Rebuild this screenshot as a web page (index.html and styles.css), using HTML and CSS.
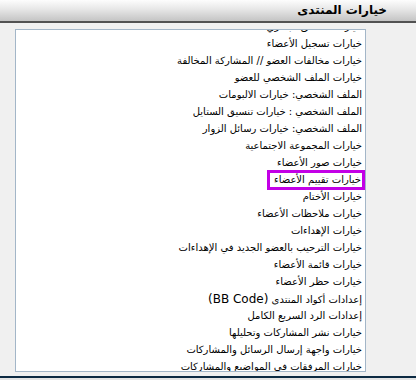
FILE: index.html
```html
<!DOCTYPE html>
<html lang="ar" dir="rtl">
<head>
    <meta charset="UTF-8">
    <meta name="viewport" content="width=device-width, initial-scale=1.0">
    <title>خيارات المنتدى</title>
    <link rel="stylesheet" href="styles.css">
</head>
<body>
    <div class="head">خيارات المنتدى</div>
    <div class="panel">
        <div class="listbox">
            <ul class="options">
                <li>خيارات التحقق البشري</li>
                <li>خيارات تسجيل الأعضاء</li>
                <li>خيارات مخالفات العضو // المشاركة المخالفة</li>
                <li>خيارات الملف الشخصي للعضو</li>
                <li>الملف الشخصي: خيارات الالبومات</li>
                <li>الملف الشخصي : خيارات تنسيق الستايل</li>
                <li>الملف الشخصي: خيارات رسائل الزوار</li>
                <li>خيارات المجموعة الاجتماعية</li>
                <li>خيارات صور الأعضاء</li>
                <li><span class="marked">خيارات تقييم الأعضاء</span></li>
                <li>خيارات الأختام</li>
                <li>خيارات ملاحظات الأعضاء</li>
                <li>خيارات الإهداءات</li>
                <li>خيارات الترحيب بالعضو الجديد في الإهداءات</li>
                <li>خيارات قائمة الأعضاء</li>
                <li>خيارات حظر الأعضاء</li>
                <li><span>إعدادات أكواد المنتدى <span class="latin">(BB Code)</span></span></li>
                <li>إعدادات الرد السريع الكامل</li>
                <li>خيارات نشر المشاركات وتحليلها</li>
                <li>خيارات واجهة إرسال الرسائل والمشاركات</li>
                <li>خيارات المرفقات في المواضيع والمشاركات</li>
            </ul>
        </div>
    </div>
    <div class="foot"></div>
</body>
</html>
```

FILE: styles.css
```css
* { margin: 0; padding: 0; box-sizing: border-box; }
body {
    font-family: "DejaVu Sans", sans-serif;
    background: #ebebeb;
    color: #000;
    width: 416px; height: 380px; overflow: hidden;
}
.head {
    height: 23px;
    padding-right: 29px;
    background: linear-gradient(to bottom, #fdfdfd, #e6e6e6 45%, #c4c4c4);
    border-bottom: 2px solid #525252;
    font-size: 12px; font-weight: bold;
    line-height: 20px;
}
.panel {
    background: #f0f0f0;
    height: 353px;
    padding: 6px 50px 0 15px;
}
.listbox {
    background: #fff;
    border: 1px solid #a3b6c8;
    height: 343px;
    overflow: hidden;
}
.options {
    list-style: none;
    margin-top: -12px;
    padding-right: 3px;
}
.options li {
    display: flex;
    align-items: center;
    height: 17px;
    font-size: 10px;
    white-space: nowrap;
}
.marked {
    flex: none;
    height: 20px;
    line-height: 14px;
    border: 3px solid #c300e6;
    padding: 0 1px 0 4px;
    margin-right: -3px;
}
.latin { font-size: 12px; }
.foot {
    border-top: 2px solid #0c2a42;
    height: 4px;
    background: #e4e4e4;
}
```
